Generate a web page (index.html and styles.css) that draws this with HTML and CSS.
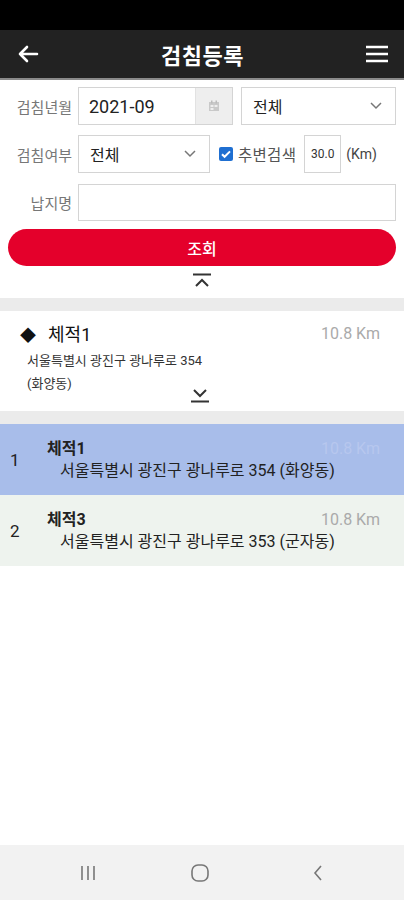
FILE: index.html
```html
<!DOCTYPE html>
<html>
<head>
<meta name="viewport" content="width=device-width, initial-scale=1">
<link rel="stylesheet" href="styles.css">
</head>
<body>
<div class="screen">
  <div class="statusbar"></div>

  <div class="appbar">
    <span class="appbar-btn">
      <svg width="22" height="20" viewBox="0 0 22 20"><path d="M20 10H3M10 3L3 10l7 7" fill="none" stroke="#fff" stroke-width="2.6" stroke-linecap="round" stroke-linejoin="round"/></svg>
    </span>
    <h1 class="title">검침등록</h1>
    <span class="appbar-btn">
      <svg width="24" height="18" viewBox="0 0 24 18"><path d="M1 2h22M1 9h22M1 16h22" stroke="#fff" stroke-width="2.6"/></svg>
    </span>
  </div>

  <form class="search">
    <div class="row">
      <label class="lbl">검침년월</label>
      <div class="field date">
        <span class="val big">2021-09</span>
        <span class="addon">
          <svg width="12" height="12" viewBox="0 0 12 12"><rect x="1" y="2" width="10" height="9" fill="#c9c9c9"/><rect x="3" y="0.5" width="1.5" height="3" fill="#bbb"/><rect x="7.5" y="0.5" width="1.5" height="3" fill="#bbb"/><rect x="2.5" y="5" width="3" height="2" fill="#eee"/><rect x="6.5" y="5" width="3" height="2" fill="#eee"/><rect x="2.5" y="8" width="3" height="2" fill="#eee"/></svg>
        </span>
      </div>
      <div class="field select wide">
        <span class="val">전체</span>
        <svg class="chev" width="12" height="8" viewBox="0 0 12 8"><path d="M1 1l5 5 5-5" fill="none" stroke="#777" stroke-width="1.5"/></svg>
      </div>
    </div>

    <div class="row">
      <label class="lbl">검침여부</label>
      <div class="field select narrow">
        <span class="val">전체</span>
        <svg class="chev" width="12" height="8" viewBox="0 0 12 8"><path d="M1 1l5 5 5-5" fill="none" stroke="#777" stroke-width="1.5"/></svg>
      </div>
      <span class="check">
        <svg width="14" height="14" viewBox="0 0 14 14"><rect width="14" height="14" rx="2" fill="#1f6fd1"/><path d="M3 7.2l2.6 2.6L11 4.4" fill="none" stroke="#fff" stroke-width="2"/></svg>
      </span>
      <span class="near">추변검색</span>
      <div class="field km"><span>30.0</span></div>
      <span class="unit">(Km)</span>
    </div>

    <div class="row">
      <label class="lbl">납지명</label>
      <div class="field full"></div>
    </div>

    <button type="button" class="searchbtn">조회</button>

    <div class="toggle">
      <svg width="20" height="16" viewBox="0 0 20 16"><path d="M1 1.5h18" stroke="#333" stroke-width="2"/><path d="M4 13l6-6 6 6" fill="none" stroke="#333" stroke-width="2"/></svg>
    </div>
  </form>

  <div class="gap"></div>

  <div class="card">
    <div class="card-head">
      <span class="name"><span class="diamond">◆</span>체적1</span>
      <span class="dist">10.8 Km</span>
    </div>
    <p class="addr">서울특별시 광진구 광나루로 354<br>(화양동)</p>
    <div class="toggle down">
      <svg width="20" height="16" viewBox="0 0 20 16"><path d="M4 3l6 6 6-6" fill="none" stroke="#333" stroke-width="2"/><path d="M1 14.5h18" stroke="#333" stroke-width="2"/></svg>
    </div>
  </div>

  <div class="gap"></div>

  <ul class="list">
    <li class="item active">
      <span class="no">1</span>
      <div class="info">
        <div class="info-top"><b>체적1</b><span class="dist">10.8 Km</span></div>
        <div class="info-addr">서울특별시 광진구 광나루로 354 (화양동)</div>
      </div>
    </li>
    <li class="item">
      <span class="no">2</span>
      <div class="info">
        <div class="info-top"><b>체적3</b><span class="dist">10.8 Km</span></div>
        <div class="info-addr">서울특별시 광진구 광나루로 353 (군자동)</div>
      </div>
    </li>
  </ul>

  <div class="navbar">
    <svg class="nav-recent" width="18" height="16" viewBox="0 0 18 16"><path d="M3 1v14M9 1v14M15 1v14" stroke="#777" stroke-width="1.6"/></svg>
    <svg class="nav-home" width="20" height="20" viewBox="0 0 20 20"><rect x="2" y="2" width="16" height="16" rx="6" fill="none" stroke="#777" stroke-width="1.6"/></svg>
    <svg class="nav-back" width="12" height="18" viewBox="0 0 12 18"><path d="M9 2L3 9l6 7" fill="none" stroke="#777" stroke-width="1.6"/></svg>
  </div>
</div>
</body>
</html>
```

FILE: styles.css
```css
* {
  box-sizing: border-box;
}

body {
  margin: 0;
  font-family: Roboto, "Noto Sans CJK KR", sans-serif;
  color: #222;
  background: #fff;
}

.screen {
  width: 404px;
  min-height: 900px;
  display: flex;
  flex-direction: column;
}

.statusbar {
  height: 30px;
  background: #000;
}

/* top bar */
.appbar {
  height: 50px;
  background: #222;
  border-bottom: 2px solid #8a8a8a;
  display: flex;
  align-items: center;
  justify-content: space-between;
  padding: 0 14px 0 15px;
}

.appbar-btn {
  display: flex;
  width: 26px;
  justify-content: center;
}

.title {
  margin: 0;
  color: #fff;
  font-size: 22px;
  font-weight: 700;
  letter-spacing: 0.5px;
}

/* search form */
.search {
  padding: 7px 8px 0 8px;
}

.row {
  display: flex;
  align-items: center;
  height: 38px;
  margin-bottom: 10px;
}

.lbl {
  width: 64px;
  margin-right: 6px;
  text-align: right;
  font-size: 15px;
  color: #777;
  white-space: nowrap;
}

.field {
  height: 38px;
  border: 1px solid #d4d4d4;
  background: #fff;
  display: flex;
  align-items: center;
}

.val {
  padding-left: 11px;
  font-size: 16px;
  color: #222;
  flex: 1;
}

.val.big {
  font-size: 18px;
  padding-left: 10px;
}

.date {
  width: 155px;
}

.addon {
  width: 37px;
  height: 100%;
  background: #eee;
  border-left: 1px solid #e2e2e2;
  display: flex;
  align-items: center;
  justify-content: center;
}

.chev {
  margin-right: 13px;
}

.wide {
  width: 155px;
  margin-left: 8px;
}

.narrow {
  width: 132px;
}

.check {
  display: flex;
  margin-left: 9px;
  margin-right: 5px;
}

.near {
  font-size: 15.5px;
  color: #555;
  white-space: nowrap;
  letter-spacing: 0.3px;
}

.km {
  width: 37px;
  margin-left: 8px;
  justify-content: center;
  font-size: 12px;
  color: #333;
}

.unit {
  margin-left: 5px;
  font-size: 14px;
  color: #444;
}

.full {
  flex: 1;
  height: 37px;
}

.searchbtn {
  display: block;
  width: 100%;
  height: 37px;
  margin-top: -2px;
  border: none;
  border-radius: 19px;
  background: #e4002b;
  color: #fff;
  font-family: inherit;
  font-size: 16px;
  font-weight: 500;
}

.toggle {
  display: flex;
  justify-content: center;
  padding: 7px 0 9px;
}

.gap {
  height: 13px;
  background: #ebebeb;
}

/* selected card */
.card {
  padding: 9px 24px 0 20px;
}

.card-head {
  display: flex;
  justify-content: space-between;
  align-items: center;
}

.name {
  font-size: 18px;
  font-weight: 400;
  color: #111;
}

.diamond {
  font-size: 16px;
  margin-right: 12px;
}

.dist {
  font-size: 16px;
  color: #aaa;
}

.addr {
  margin: 3px 0 0 7px;
  font-size: 13px;
  line-height: 23px;
  color: #333;
}

.card .toggle.down {
  padding: 0 0 8px;
  margin-top: -8px;
}

/* result list */
.list {
  list-style: none;
  margin: 0;
  padding: 0;
}

.item {
  display: flex;
  align-items: center;
  height: 71px;
  background: #eef3ee;
}

.item.active {
  background: #a8bdea;
}

.no {
  width: 47px;
  padding-left: 10px;
  font-size: 17px;
  color: #222;
}

.info {
  flex: 1;
  padding-right: 24px;
  padding-top: 2px;
}

.info-top {
  display: flex;
  justify-content: space-between;
  font-size: 16px;
  line-height: 20px;
}

.info-top b {
  font-weight: 700;
}

.item.active .dist {
  color: #b7c7ee;
}

.info-addr {
  padding-left: 13px;
  margin-top: 1px;
  font-size: 16px;
  line-height: 22px;
  color: #222;
}

/* system nav */
.navbar {
  margin-top: auto;
  height: 55px;
  background: #f2f2f2;
  display: flex;
  align-items: center;
  padding-left: 79px;
}

.nav-home {
  margin-left: 93px;
}

.nav-back {
  margin-left: 102px;
}
```
